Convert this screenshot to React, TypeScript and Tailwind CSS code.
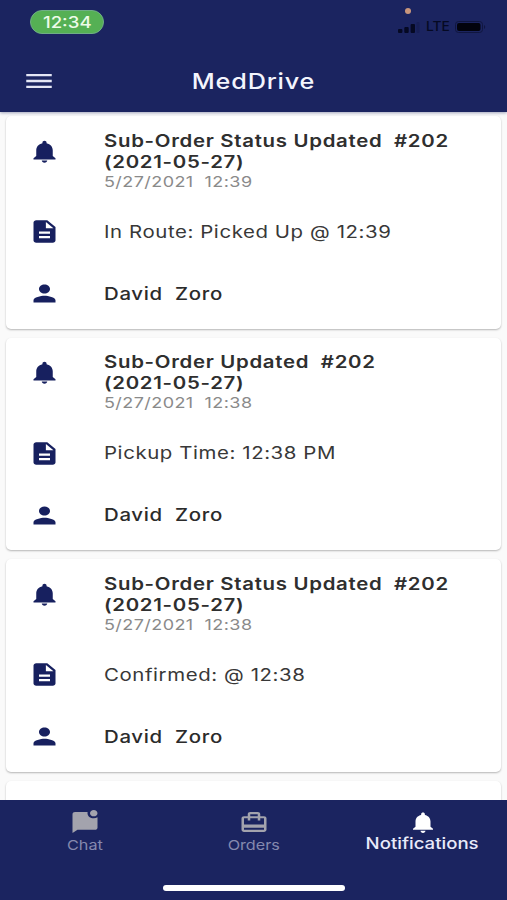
import type { ReactNode } from "react";

const ICONS = {
  bell: "M12 22c1.1 0 2-.9 2-2h-4c0 1.1.89 2 2 2zm6-6v-5c0-3.07-1.64-5.64-4.5-6.32V4c0-.83-.67-1.5-1.5-1.5s-1.5.67-1.5 1.5v.68C7.63 5.36 6 7.92 6 11v5l-2 2v1h16v-1l-2-2z",
  doc: "M14 2H6c-1.1 0-1.99.9-1.99 2L4 20c0 1.1.89 2 1.99 2H18c1.1 0 2-.9 2-2V8l-6-6zm2 16H8v-2h8v2zm0-4H8v-2h8v2zm-3-5V3.5L18.5 9H13z",
  person: "M12 12c2.21 0 4-1.79 4-4s-1.79-4-4-4-4 1.79-4 4 1.79 4 4 4zm0 2c-2.67 0-8 1.34-8 4v2h16v-2c0-2.66-5.33-4-8-4z",
  menu: "M3 18h18v-2H3v2zm0-5h18v-2H3v2zm0-7v2h18V6H3z",
  chat: "M22 6.98V17c0 1.1-.9 2-2 2H6l-4 3V4c0-1.1.9-2 2-2h10.1c-.06.32-.1.66-.1 1 0 2.76 2.24 5 5 5 1.13 0 2.16-.39 3-1.02zM16 3c0 1.66 1.34 3 3 3s3-1.34 3-3-1.34-3-3-3-3 1.34-3 3z",
  orders: "M20 6h-3V4c0-1.11-.89-2-2-2H9c-1.11 0-2 .89-2 2v2H4c-1.11 0-2 .89-2 2v11c0 1.11.89 2 2 2h16c1.11 0 2-.89 2-2V8c0-1.11-.89-2-2-2zM9 4h6v2H9V4zm11 15H4v-2h16v2zm0-5H4V8h3v2h2V8h6v2h2V8h3v6z",
};

const NOTIFICATIONS = [
  { title: "Sub-Order Status Updated  #202", date: "5/27/2021  12:39", detail: "In Route: Picked Up @ 12:39" },
  { title: "Sub-Order Updated  #202", date: "5/27/2021  12:38", detail: "Pickup Time: 12:38 PM" },
  { title: "Sub-Order Status Updated  #202", date: "5/27/2021  12:38", detail: "Confirmed: @ 12:38" },
];

function Icon({ name, className }: { name: keyof typeof ICONS; className: string }) {
  return (
    <svg viewBox="0 0 24 24" preserveAspectRatio="none" fill="currentColor" className={`shrink-0 overflow-visible ${className}`}>
      <path d={ICONS[name]} />
    </svg>
  );
}

function Row({ icon, className, children }: { icon: keyof typeof ICONS; className: string; children: ReactNode }) {
  return (
    <div className={`flex items-center pl-[21.5px] ${className}`}>
      <Icon name={icon} className="mb-[2px] h-[27px] w-[33px] text-[#17205f]" />
      <div className="ml-[43px] origin-left scale-x-[1.2] whitespace-pre">{children}</div>
    </div>
  );
}

function NotificationCard({ title, date, detail }: (typeof NOTIFICATIONS)[number]) {
  return (
    <article className="h-[212.5px] shrink-0 rounded-[5px] bg-white shadow-[0_1px_2px_rgba(0,0,0,0.28)]">
      <div className="flex items-start pt-[13.5px] pl-[21.5px]">
        <Icon name="bell" className="mt-[8px] h-[27px] w-[33px] text-[#17205f]" />
        <div className="ml-[43px] origin-left scale-x-[1.2] whitespace-pre">
          <h2 className="pt-px text-[17px] leading-[21px] font-semibold tracking-[0.58px] text-[#2f2f2f]">
            {title}
            <br />
            (2021-05-27)
          </h2>
          <p className="text-[15px] leading-[18px] tracking-[0.36px] text-[#8a8a8a]">{date}</p>
        </div>
      </div>
      <Row icon="doc" className="mt-[26.5px] h-[31px] text-[17px] tracking-[0.49px] text-[#383838]">
        {detail}
      </Row>
      <Row icon="person" className="mt-[31px] h-[31px] text-[17px] font-medium tracking-[0.56px] text-[#2b2b2b]">
        David  Zoro
      </Row>
    </article>
  );
}

function StatusBar() {
  return (
    <div className="relative flex h-[46px] items-start justify-between pt-[10px] pr-[20px] pl-[30px]">
      <div className="flex h-[24px] w-[74px] items-center justify-center rounded-full border border-[#6fae86] bg-[#55b054] text-[15.5px] font-medium text-[#eefbe9]">
        <span className="mt-[2px] scale-x-[1.2]">12:34</span>
      </div>
      <div className="mt-[10px] flex items-center text-[#050923]">
        <svg viewBox="0 0 22 11" className="h-[11px] w-[22px]" fill="currentColor">
          <rect x="0" y="7" width="4.4" height="4" rx="1" />
          <rect x="6.3" y="5" width="4.4" height="6" rx="1" />
          <rect x="12.6" y="2" width="4.4" height="9" rx="1" />
          <rect x="18.5" y="0" width="3" height="11" rx="1" opacity="0.15" />
        </svg>
        <span className="ml-[6px] w-[25px] origin-left scale-x-[1.1] text-[12.5px] leading-[14px] font-medium">LTE</span>
        <svg viewBox="0 0 32 12" className="mb-[1px] ml-[4px] h-[12px] w-[32px]">
          <rect x="0.5" y="0.5" width="27" height="11" rx="3" fill="none" stroke="#10163f" />
          <rect x="2" y="2" width="23.5" height="8" rx="2" fill="#02030d" />
          <path d="M29 4c1.6.5 1.6 3.5 0 4z" fill="#10163f" />
        </svg>
      </div>
      <span className="absolute top-[8px] left-[405px] size-[5.5px] rounded-full bg-[#c9967c]" />
    </div>
  );
}

function Tab({ icon, label, active }: { icon: keyof typeof ICONS; label: string; active?: boolean }) {
  return (
    <div className={`flex flex-1 flex-col items-center pt-[10px] ${active ? "text-white" : "text-[#a3a3ad]"}`}>
      <Icon name={icon} className="h-[25px] w-[30px]" />
      {active ? (
        <span className="scale-x-[1.2] text-[15.5px] leading-[18px] font-medium text-[#e9eafa]">{label}</span>
      ) : (
        <span className="mt-px scale-x-[1.2] text-[13.5px] leading-[18px] text-[#8589ae]">{label}</span>
      )}
    </div>
  );
}

export default function App() {
  return (
    <div className="flex h-[900px] w-[507px] flex-col overflow-hidden bg-[#fafafa] font-['Inter',sans-serif]">
      <header className="z-10 h-[111.5px] shrink-0 bg-[#1b2460] shadow-[0_1px_3px_rgba(27,36,96,0.4)]">
        <StatusBar />
        <div className="grid h-[69px] grid-cols-3 items-center">
          <Icon name="menu" className="ml-[21.5px] h-[28px] w-[34px] text-[#e4e6f5]" />
          <h1 className="scale-x-[1.2] pt-[2px] text-center text-[21px] font-medium tracking-[0.7px] text-[#f4f5fd]">MedDrive</h1>
        </div>
      </header>

      <main className="flex min-h-0 flex-1 flex-col gap-[9px] overflow-hidden px-[6px] pt-[4.5px]">
        {NOTIFICATIONS.map((n, i) => (
          <NotificationCard key={i} {...n} />
        ))}
        <article className="h-[60px] shrink-0 rounded-[5px] bg-white shadow-[0_1px_2px_rgba(0,0,0,0.28)]" />
      </main>

      <nav className="relative flex h-[100px] shrink-0 bg-[#1b2460]">
        <Tab icon="chat" label="Chat" />
        <Tab icon="orders" label="Orders" />
        <Tab icon="bell" label="Notifications" active />
        <div className="absolute bottom-[9px] left-[163px] h-[6px] w-[182px] rounded-full bg-white" />
      </nav>
    </div>
  );
}
